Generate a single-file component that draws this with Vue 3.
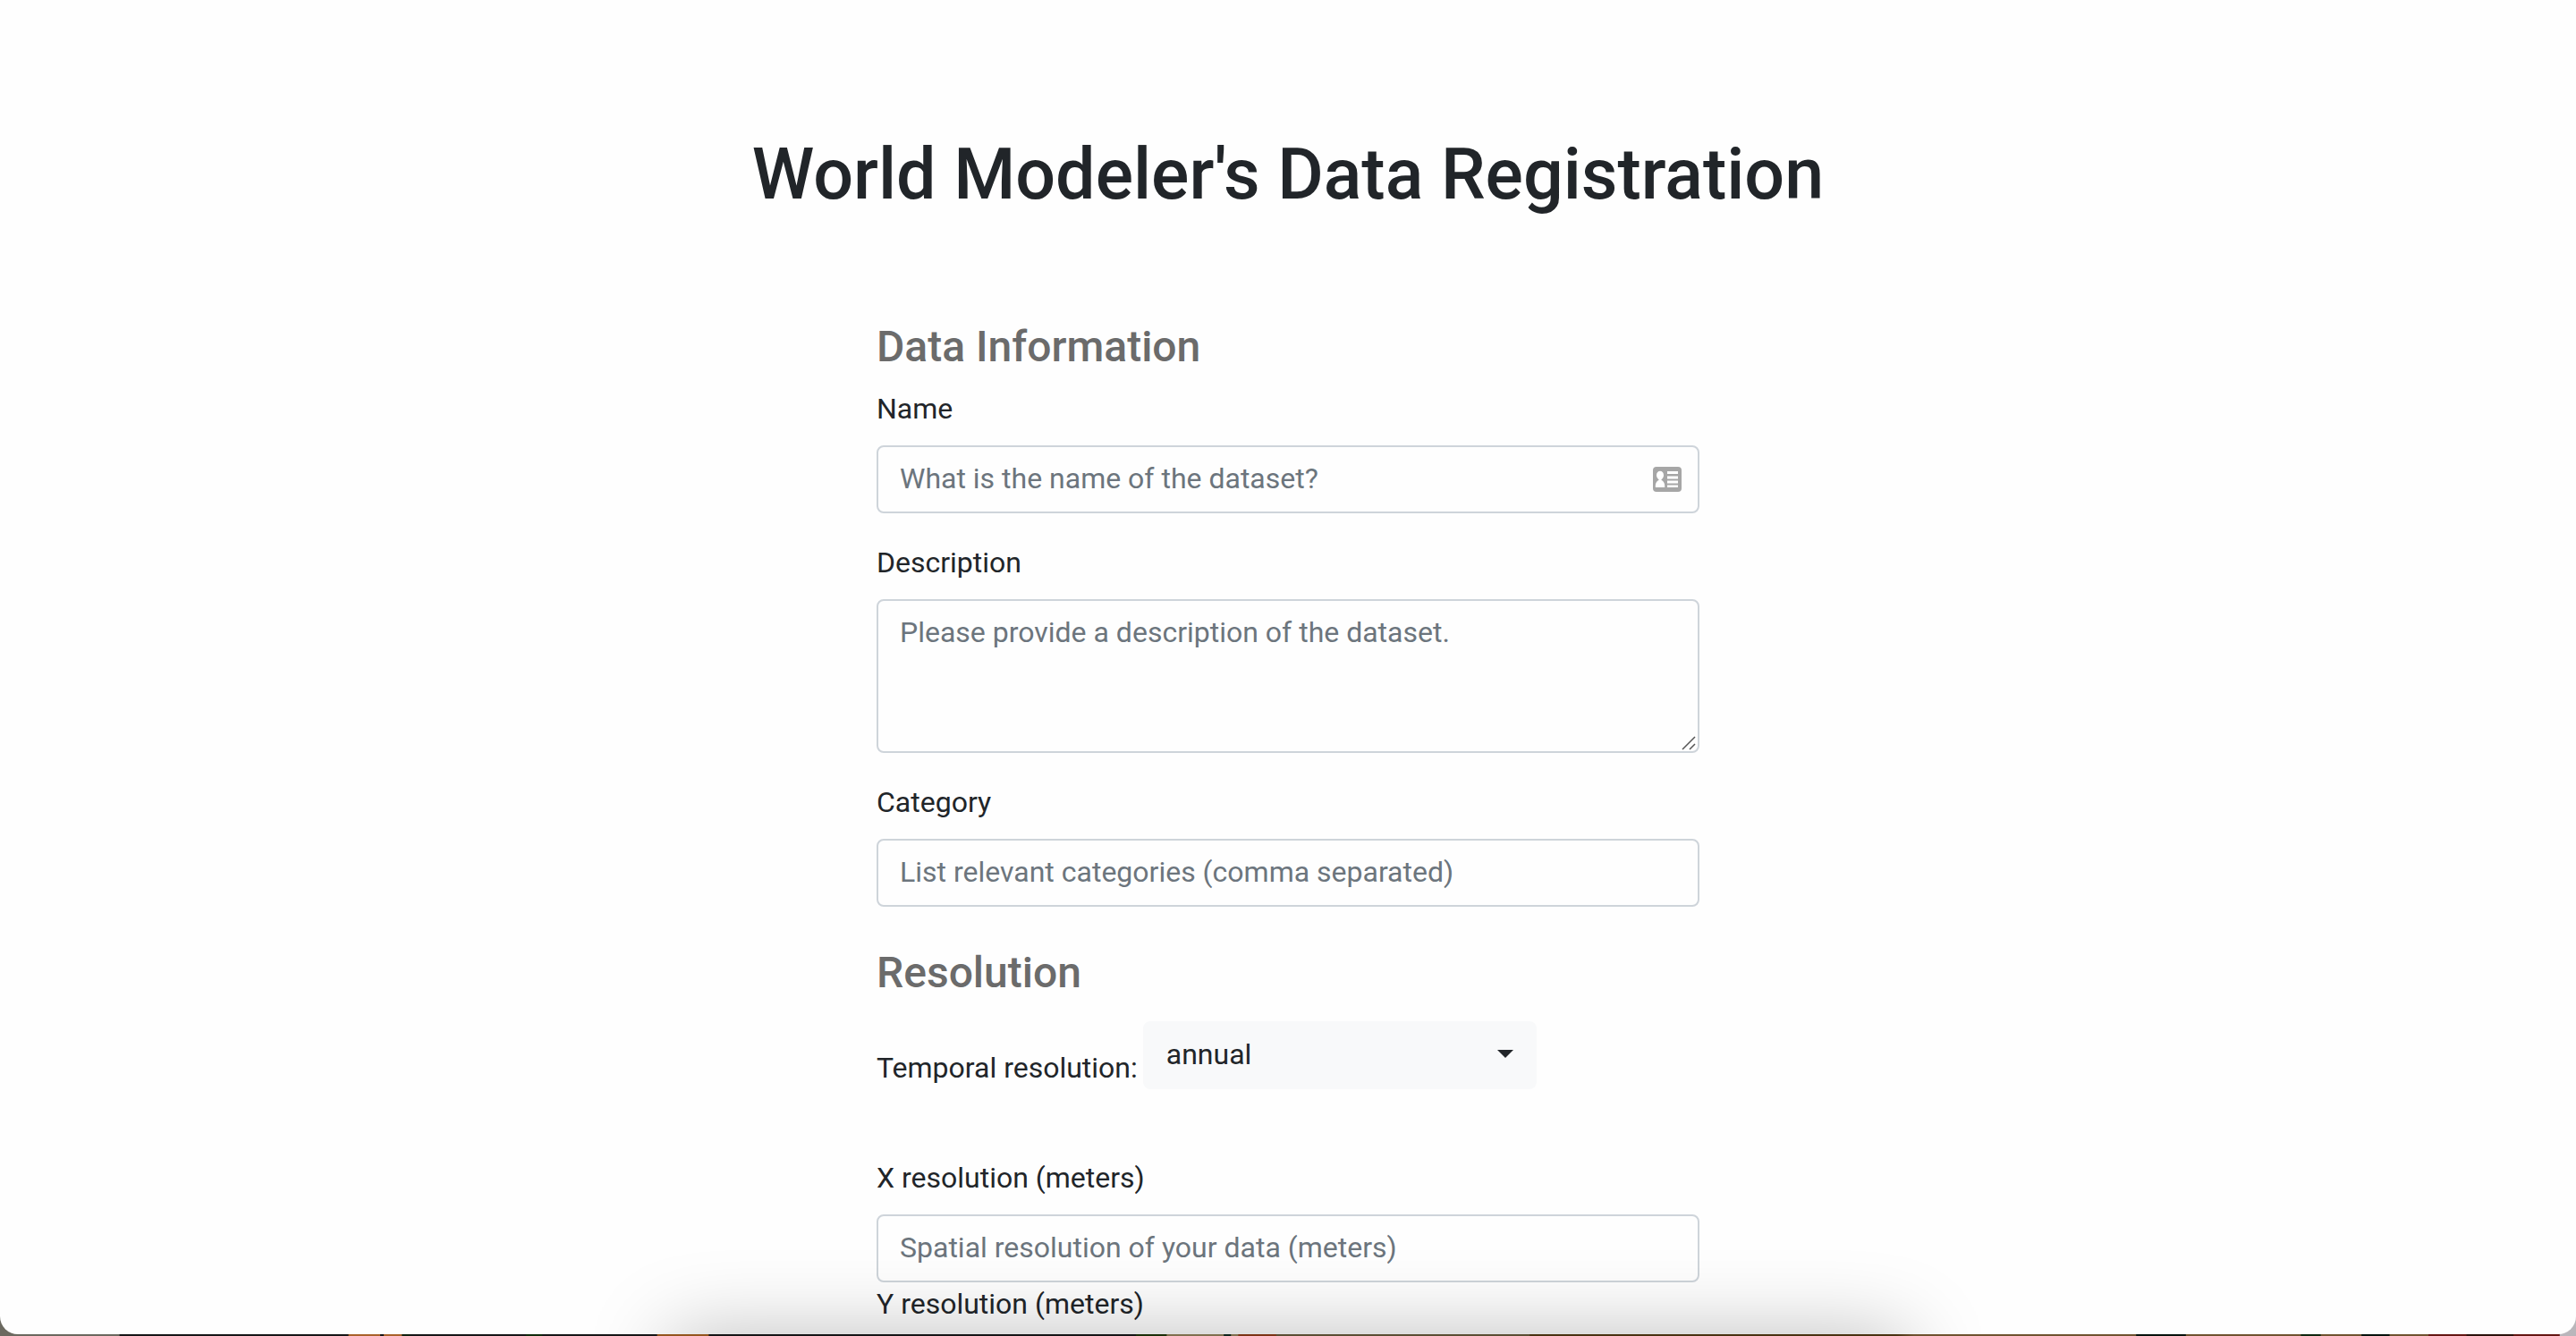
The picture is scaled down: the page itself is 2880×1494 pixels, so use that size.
<script setup>
import { ref } from 'vue'

const name = ref('')
const description = ref('')
const category = ref('')
const temporal = ref('annual')
const xResolution = ref('')
const yResolution = ref('')
</script>

<template>
  <div class="window">
    <main class="page">
      <h1>World Modeler's Data Registration</h1>
      <form class="form" @submit.prevent>
        <h2>Data Information</h2>
        <div class="group">
          <label for="name">Name</label>
          <div class="control">
            <input id="name" v-model="name" type="text" placeholder="What is the name of the dataset?" />
            <svg class="card-icon" viewBox="0 0 32 28" aria-hidden="true">
              <rect width="32" height="28" rx="4" fill="#a6a6a6" />
              <ellipse cx="8" cy="9.500" rx="4" ry="4.800" fill="#fff" />
              <path d="M6.500 13h3v2c2 .7 3.700 3 3.700 6v2H2.800v-2c0-3 1.700-5.300 3.700-6z" fill="#fff" />
              <path d="M16 5h12v3H16zM16 10.500h12v3H16zM16 15.500h12v3H16zM16 20.500h12v2.500H16z" fill="#fff" />
            </svg>
          </div>
        </div>
        <div class="group">
          <label for="description">Description</label>
          <div class="control">
            <textarea id="description" v-model="description" rows="3" placeholder="Please provide a description of the dataset."></textarea>
            <svg class="grip" viewBox="0 0 16 16" aria-hidden="true">
              <path d="M1 15 15 1M9 15l6-6" fill="none" stroke="#555" stroke-width="1.500" />
            </svg>
          </div>
        </div>
        <div class="group">
          <label for="category">Category</label>
          <input id="category" v-model="category" type="text" placeholder="List relevant categories (comma separated)" />
        </div>

        <h2 class="next">Resolution</h2>
        <div class="inline">
          <label for="temporal">Temporal resolution:</label>
          <div class="control select">
            <select id="temporal" v-model="temporal">
              <option value="annual">annual</option>
            </select>
            <span class="caret"></span>
          </div>
        </div>
        <div class="group tight">
          <label for="x-resolution">X resolution (meters)</label>
          <input id="x-resolution" v-model="xResolution" type="text" placeholder="Spatial resolution of your data (meters)" />
        </div>
        <div class="group">
          <label for="y-resolution">Y resolution (meters)</label>
          <input id="y-resolution" v-model="yResolution" type="text" />
        </div>
      </form>
    </main>
    <div class="shade"></div>
  </div>
</template>

<style>
body {
  margin: 0;
  background: linear-gradient(
    90deg,
    #6b695f 0 134px, #161617 134px 390px, #a9622b 390px 425px, #161617 425px 429px,
    #a9622b 429px 449px, #10220f 449px 458px, #161617 458px 588px, #102c0c 588px 606px,
    #161617 606px 735px, #94561f 735px 792px, #161617 792px 1270px, #1c3009 1270px 1304px,
    #80714f 1304px 1368px, #10241c 1368px 1376px, #80714f 1376px 1384px, #7c3416 1384px 1427px,
    #5b4f34 1427px 1710px, #4a3312 1710px 2120px, #6f5330 2140px 2388px, #07130d 2388px 2444px,
    #6f5330 2444px 2572px, #10280f 2572px 2595px, #6f5330 2595px 2640px, #07130d 2640px 2672px,
    #6f5330 2672px 2715px, #651714 2715px 2758px, #2b120c 2758px 2810px, #651714 2810px 2862px,
    #b9b6bb 2862px
  );
}
</style>

<style scoped>
.window {
  position: relative;
  box-sizing: border-box;
  height: calc(100vh - 2px);
  overflow: hidden;
  background: #fefefe;
  border-radius: 0 0 20px 20px;
  color: #212529;
  font: 400 32px/48px Roboto, "Liberation Sans", sans-serif;
}

.page {
  padding-top: 147px;
}

h1 {
  margin: 0 0 116px;
  font: 500 79px/96px Roboto, "Liberation Sans", sans-serif;
  text-align: center;
}

.form {
  width: 920px;
  max-width: 100%;
  margin: 0 auto;
}

h2 {
  margin: 0 0 16px;
  color: #6b6b6b;
  font-size: 48px;
  font-weight: 500;
  line-height: 58px;
}

h2.next {
  margin: 45px 0 25px;
}

.group {
  display: flex;
  flex-direction: column;
  gap: 17px;
  margin-bottom: 31px;
}

.group.tight {
  margin-bottom: 0;
}

.inline {
  display: flex;
  align-items: flex-end;
  gap: 6px;
  margin-bottom: 75px;
}

.control {
  position: relative;
  display: flex;
}

input,
textarea,
select {
  box-sizing: border-box;
  width: 100%;
  height: 76px;
  margin: 0;
  padding: 11px 24px 13px;
  border: 2px solid #ced4da;
  border-radius: 8px;
  background: transparent;
  color: inherit;
  font: inherit;
}

textarea {
  height: 172px;
}

textarea::-webkit-resizer {
  display: none;
}

::placeholder {
  color: #6c757d;
  opacity: 1;
}

.select {
  width: 440px;
}

select {
  appearance: none;
  border-color: #f8f9fa;
  background: #f8f9fa;
}

.card-icon {
  position: absolute;
  top: 24px;
  right: 20px;
  width: 32px;
  height: 28px;
}

.grip {
  position: absolute;
  right: 4px;
  bottom: 3px;
  width: 16px;
  height: 16px;
  pointer-events: none;
}

.caret {
  position: absolute;
  top: 32px;
  right: 26px;
  border-top: 9px solid #212529;
  border-right: 9px solid transparent;
  border-left: 9px solid transparent;
  pointer-events: none;
}

/* Soft shadow rising from the panel under the window */
.shade {
  position: absolute;
  top: 100%;
  right: 26%;
  left: 26%;
  height: 200px;
  box-shadow: 0 0 90px rgba(0, 0, 0, 0.25);
  pointer-events: none;
}
</style>
